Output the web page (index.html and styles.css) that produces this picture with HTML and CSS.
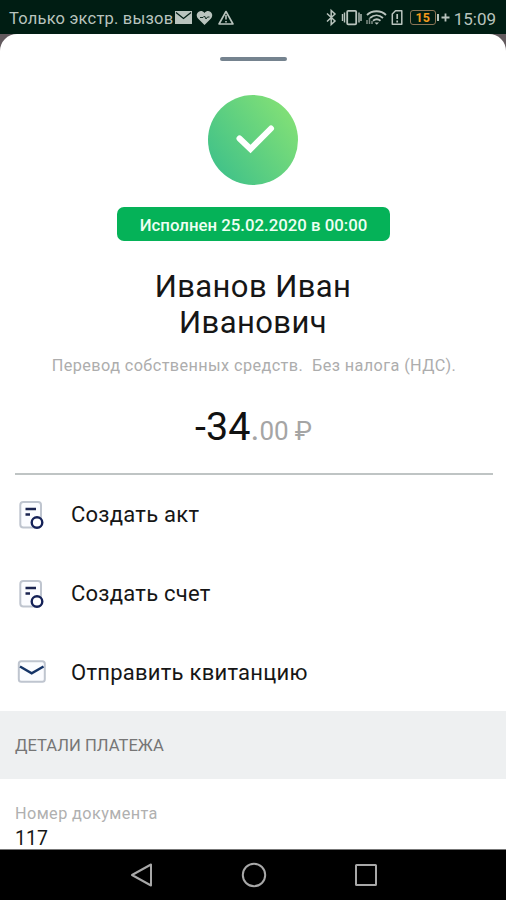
FILE: index.html
```html
<!DOCTYPE html>
<html lang="ru">
<head>
<meta charset="utf-8">
<title>Детали платежа</title>
<link rel="stylesheet" href="styles.css">
</head>
<body>
<div class="screen">
  <header class="status">
    <span class="carrier">Только экстр. вызов</span>
    <svg class="status-left" width="60" height="20" viewBox="175 8 60 20">
      <rect x="175" y="11" width="17" height="13" fill="#b9c4be"/>
      <path d="M176 12.500l7.500 6 7.500-6" fill="none" stroke="#001d13" stroke-width="1.300"/>
      <path d="M204.500 25l-6.500-6.500c-4-4.500 2.500-10.500 6.500-5.500 4-5 10.500 1 6.500 5.500z" fill="#b9c4be"/>
      <path d="M200 17.500h3l1.500-1.500 1.500 3 1.500-2h2" fill="none" stroke="#001d13" stroke-width=".9"/>
      <path d="M226 11.500l7 12.500h-14z" fill="none" stroke="#b9c4be" stroke-width="1.600" stroke-linejoin="round"/>
      <path d="M226 15v4.500M226 21v1.500" stroke="#b9c4be" stroke-width="1.600"/>
    </svg>
    <svg class="status-right" width="78" height="20" viewBox="325 8 78 20" fill="none" stroke="#b9c4be" stroke-width="1.500">
      <path d="M327 13.500l8 7.500-3.800 3.500V10.500L335 14l-8 7.500"/>
      <rect x="347.200" y="10.800" width="9" height="13.500" rx="1" stroke-width="1.800"/>
      <path d="M344.500 12.500v10M342.500 14v7M359 12.500v10M361 14v7" stroke-width="1.400"/>
      <path d="M367 15c5-5 14-5 19 0M370 18c4-3.500 9-3.500 13 0M373 20.800c2.500-2 5-2 7.500 0" stroke-width="1.800"/>
      <path d="M374.500 22.500h4.500l-2.200 2.200z" fill="#b9c4be" stroke="none"/>
      <path d="M367 24v-4M369.500 24v-6M372 24v-3" stroke="#7e8c85"/>
      <path d="M395.500 10.800h6.300v13.400h-9.500V14z" stroke-linejoin="round"/>
      <path d="M397.200 14v5M397.200 20.500v2" stroke-width="1.700"/>
    </svg>
    <span class="battery">15</span>
    <svg class="plus" width="15" height="20" viewBox="436 8 15 20" stroke="#b9c4be" fill="none">
      <path d="M438 14v7" stroke-width="2"/><path d="M441.500 17.500h8M445.500 13.500v8" stroke-width="1.800"/>
    </svg>
    <span class="clock">15:09</span>
  </header>
  <div class="backdrop">
    <main class="sheet">
      <div class="handle"></div>
      <svg class="success" width="92" height="92" viewBox="0 0 92 92">
        <defs><linearGradient id="green" x1=".1" y1=".8" x2=".9" y2=".2"><stop offset="0" stop-color="#43c388"/><stop offset="1" stop-color="#80df77"/></linearGradient></defs>
        <circle cx="46" cy="46" r="45" fill="url(#green)"/>
        <path d="M32.500 44.500L43.500 55 64 34.500" fill="none" stroke="#fff" stroke-width="6" stroke-linecap="round"/>
      </svg>
      <div class="badge"><span>Исполнен 25.02.2020 в 00:00</span></div>
      <h1 class="name"><span>Иванов Иван</span><br><span>Иванович</span></h1>
      <p class="purpose">Перевод собственных средств.&nbsp; Без налога (НДС).</p>
      <div class="amount"><span class="major">-34</span><span class="dot">.</span><span class="minor">00</span><span class="ruble">₽</span></div>
      <nav class="actions">
        <div class="action">
          <svg width="32" height="32" viewBox="0 0 32 32" fill="none"><rect x="5.300" y="3" width="20.700" height="25.500" rx="3" fill="#fbfcff" stroke="#bfc5cf" stroke-width="2"/><path d="M10.500 10h10.500M10.500 15.500h4.500" stroke="#1b2450" stroke-width="2.400"/><circle cx="22" cy="23.500" r="5.300" fill="#fff" stroke="#142157" stroke-width="2.400"/></svg>
          <span class="act">Создать акт</span>
        </div>
        <div class="action">
          <svg width="32" height="32" viewBox="0 0 32 32" fill="none"><rect x="5.300" y="3" width="20.700" height="25.500" rx="3" fill="#fbfcff" stroke="#bfc5cf" stroke-width="2"/><path d="M10.500 10h10.500M10.500 15.500h4.500" stroke="#1b2450" stroke-width="2.400"/><circle cx="22" cy="23.500" r="5.300" fill="#fff" stroke="#142157" stroke-width="2.400"/></svg>
          <span class="invoice">Создать счет</span>
        </div>
        <div class="action">
          <svg width="32" height="32" viewBox="0 0 32 32" fill="none"><rect x="3.800" y="5.300" width="26" height="20.500" rx="2.500" fill="#fbfcff" stroke="#bfc5cf" stroke-width="2"/><path d="M5 10.500l11.700 6.800L28.500 10.500" stroke="#153467" stroke-width="2.500"/></svg>
          <span class="receipt">Отправить квитанцию</span>
        </div>
      </nav>
      <h2 class="section"><span>ДЕТАЛИ ПЛАТЕЖА</span></h2>
      <div class="field">
        <span class="label">Номер документа</span>
        <span class="value">117</span>
      </div>
    </main>
  </div>
  <footer class="navbar">
    <svg width="24" height="26" viewBox="0 0 24 26"><path d="M21 2.500v21L2 13z"/></svg>
    <svg width="26" height="26" viewBox="0 0 26 26"><circle cx="13" cy="13" r="11.200"/></svg>
    <svg width="24" height="26" viewBox="0 0 24 26"><rect x="2" y="3" width="20" height="20" rx=".5"/></svg>
  </footer>
</div>
</body>
</html>
```
FILE: styles.css
```css
* { box-sizing: border-box; }
body { margin: 0; font-family: Roboto, "Noto Sans", sans-serif; color: #161616; }
svg { display: block; flex: none; }
span { white-space: nowrap; }
.screen { width: 506px; height: 900px; display: flex; flex-direction: column; overflow: hidden; background: #fff; }
.status { height: 34px; flex: none; display: flex; align-items: center; padding: 3px 10px 0 9px; background: #001d13; color: #b9c4be; }
.status svg { margin-top: -2px; }
.status-left { margin-right: 90px; }
.carrier { width: 166px; font-size: 16.5px; letter-spacing: .2px; }
.status-right { margin-right: 7px; }
.battery { width: 26px; height: 15px; margin-top: -2px; border: 1.5px solid #8c7657; border-radius: 3px; color: #f29a1c; font-size: 12.5px; font-weight: 700; line-height: 13px; text-align: center; }
.plus { margin-right: 3px; }
.clock { font-size: 17px; }
.backdrop { height: 816px; flex: none; background: #625a5e; overflow: hidden; border-bottom: 1px solid #777; }
.sheet { height: 815px; background: #fff; border-radius: 17px 17px 0 0; display: flex; flex-direction: column; align-items: center; }
.handle { width: 67px; height: 4px; flex: none; margin-top: 22.500px; border-radius: 2px; background: #75838f; }
.success { margin-top: 33px; }
.badge { width: 273px; height: 34px; flex: none; margin-top: 21px; border-radius: 7px; background: #05b258; color: #eefff2; display: flex; align-items: center; justify-content: center; font-size: 16.8px; font-weight: 500; padding: 3px 0 0 1px; }
.name { margin: 28px 0 0; height: 73px; font-size: 31px; line-height: 36.500px; font-weight: 400; text-align: center; letter-spacing: .4px; }
.purpose { margin: 14px 0 0 2px; height: 20px; font-size: 16.25px; line-height: 20px; color: #adadad; letter-spacing: .4px; white-space: nowrap; }
.amount { height: 50px; margin-top: 26px; padding-left: 1px; line-height: 50px; white-space: nowrap; color: #a5a5a5; font-size: 26px; }
.major { font-size: 39.5px; color: #111; }
.dot { font-size: 34px; }
.ruble { margin-left: 6px; }
.actions { width: 478px; flex: none; margin: 21px 0 0 2px; border-top: 2px solid #bfc4c4; }
.action { height: 78.7px; padding-top: 2px; display: flex; align-items: center; gap: 24px; font-size: 22px; letter-spacing: .25px; }
.section { width: 506px; height: 68px; flex: none; margin: 0; padding: 2px 15px 0; display: flex; align-items: center; background: #eef0f1; color: #767676; font-size: 16.6px; font-weight: 400; }
.field { width: 476px; margin-top: 24px; display: flex; flex-direction: column; }
.label { font-size: 16.25px; line-height: 22px; color: #b0b0b0; letter-spacing: .4px; }
.value { font-size: 19.5px; line-height: 28px; }
.navbar { height: 50px; flex: none; background: #000; display: flex; align-items: center; justify-content: space-between; padding: 0 128px 0 130px; }
.navbar svg { fill: none; stroke: #a8a8a8; stroke-width: 2; stroke-linejoin: round; }
```
